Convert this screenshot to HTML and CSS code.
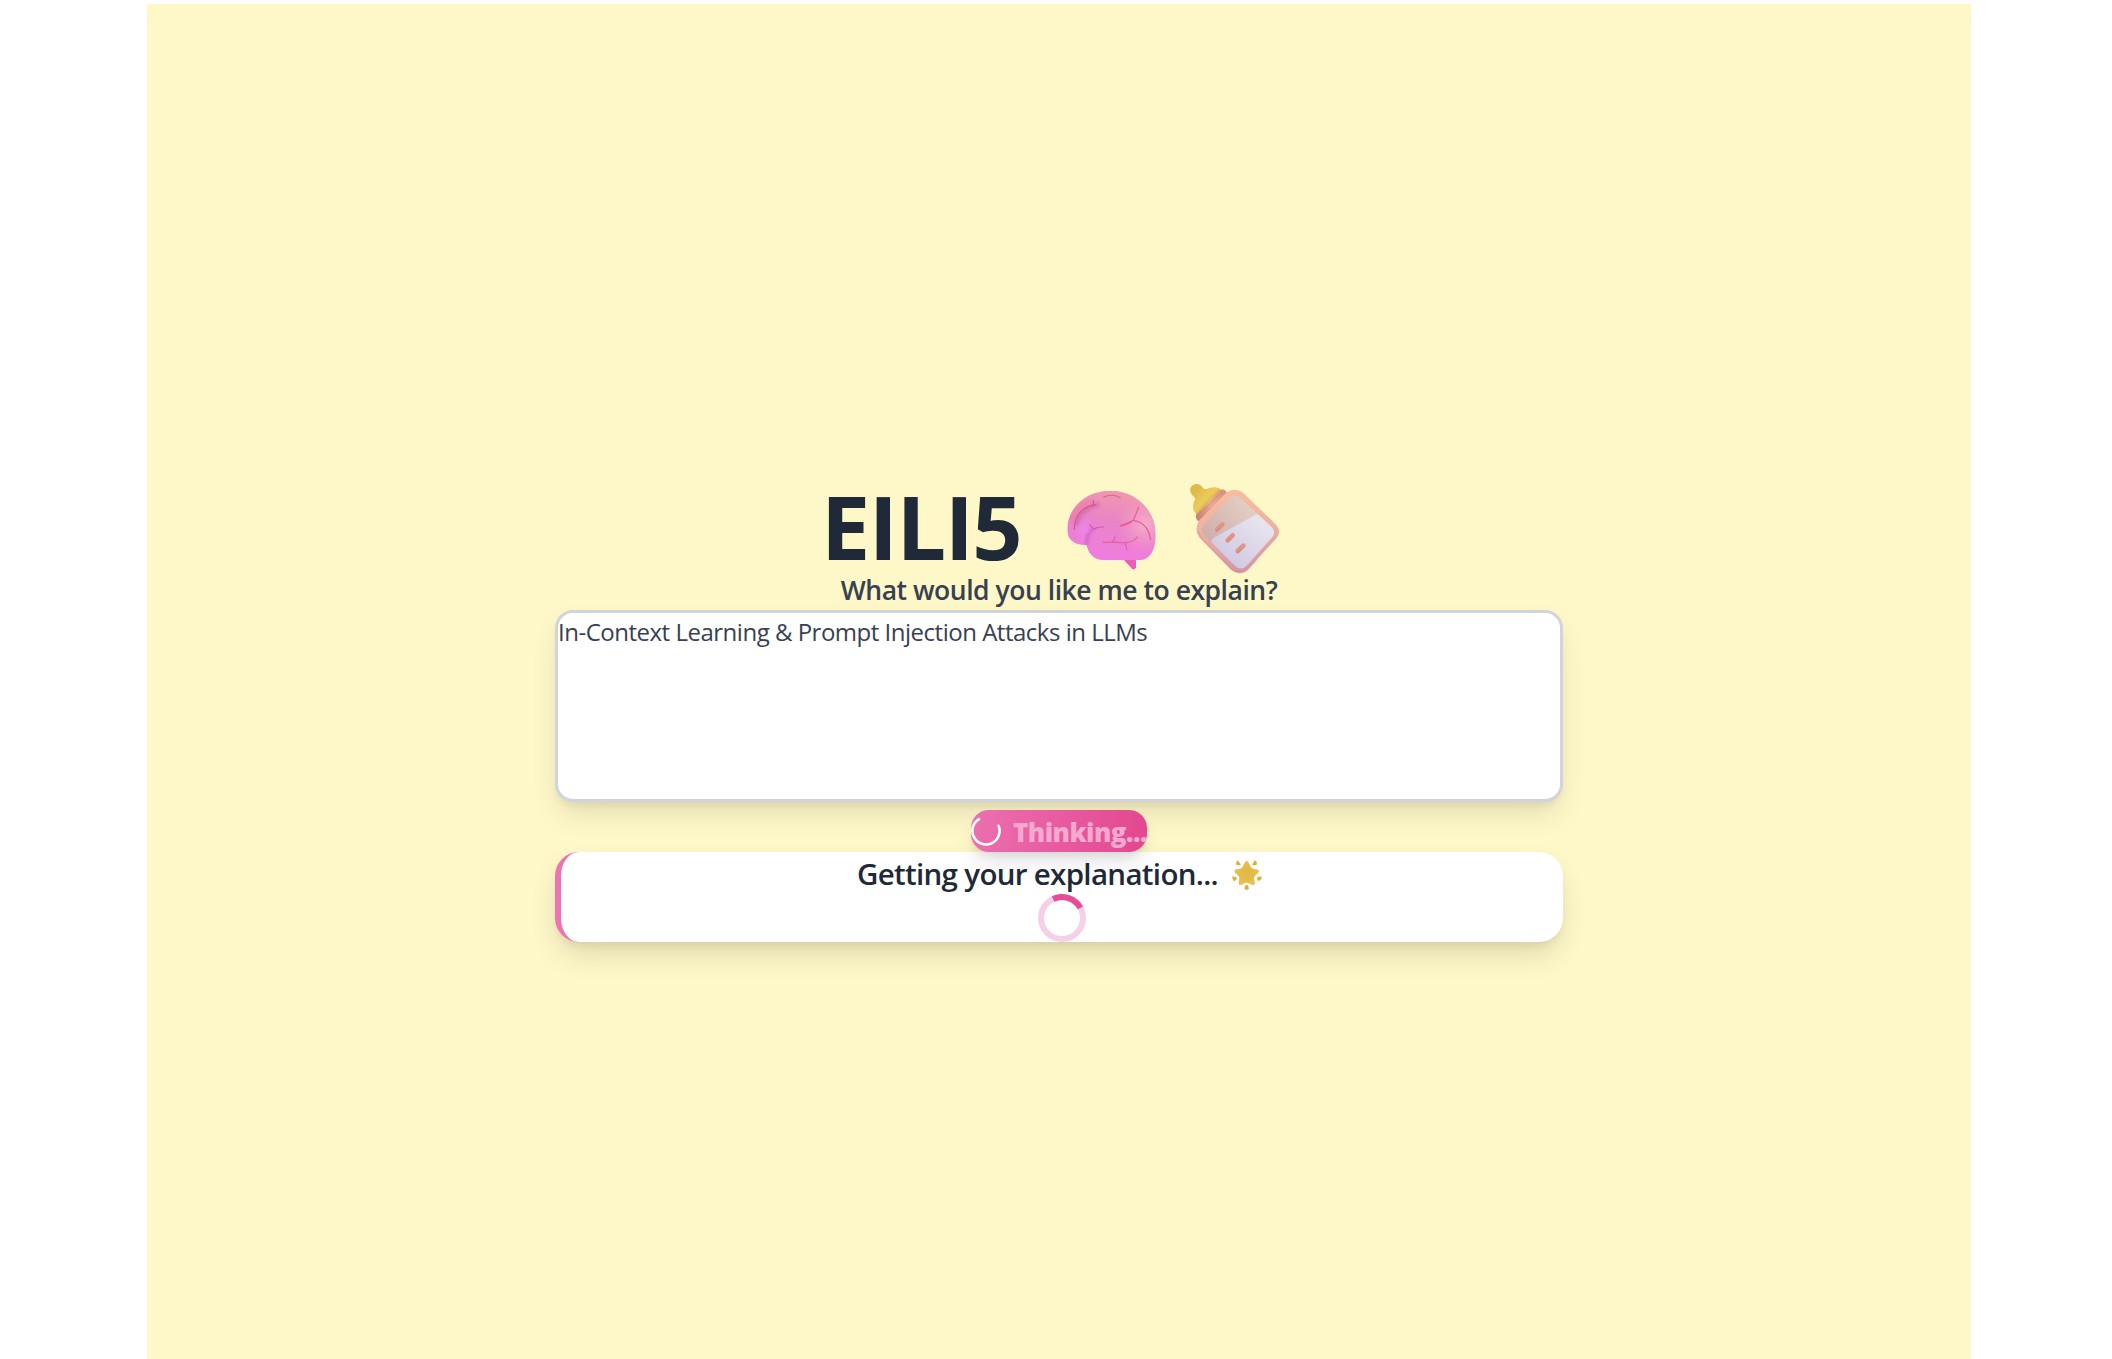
FILE: index.html
```html
<!DOCTYPE html>
<html lang="en">
<head>
<meta charset="utf-8">
<title>EILI5</title>
<link rel="stylesheet" href="styles.css">
</head>
<body>
<main class="page">
  <div class="column">
    <h1 class="title">
      <span class="title-text">EILI5</span>
      <svg class="brain" viewBox="48 57 273 243" aria-hidden="true">
        <defs>
          <linearGradient id="brainBase" x1=".7" y1="0" x2=".4" y2="1"><stop offset="0" stop-color="#f29aaa"/><stop offset=".45" stop-color="#e985c6"/><stop offset="1" stop-color="#f07be2"/></linearGradient>
          <radialGradient id="brainLight" cx="285" cy="165" r="85" gradientUnits="userSpaceOnUse"><stop offset="0" stop-color="#f5aec6"/><stop offset="1" stop-color="#f19ac8" stop-opacity="0"/></radialGradient>
          <radialGradient id="brainGlow" cx="105" cy="180" r="50" gradientUnits="userSpaceOnUse"><stop offset="0" stop-color="#ef86f0"/><stop offset="1" stop-color="#e77dd4" stop-opacity="0"/></radialGradient>
          <linearGradient id="brainShade" x1="50" y1="0" x2="120" y2="30" gradientUnits="userSpaceOnUse"><stop offset="0" stop-color="#c7649c" stop-opacity=".7"/><stop offset="1" stop-color="#d66ba4" stop-opacity="0"/></linearGradient>
          <filter id="soft" x="-30%" y="-30%" width="160%" height="160%"><feGaussianBlur stdDeviation="5"/></filter>
          <clipPath id="brainClip"><path d="M52 180C52 116 104 62 181 62C262 62 317 124 317 194C317 240 300 270 268 270H160C132 270 114 250 110 225C76 226 52 212 52 180Z"/></clipPath>
        </defs>
        <path d="M220 268H258V292Q256 300 247 297Q234 284 220 268Z" fill="#ee5cba"/>
        <g clip-path="url(#brainClip)">
          <path d="M50 60H320V272H50Z" fill="url(#brainBase)"/>
          <path d="M50 60H320V272H50Z" fill="url(#brainLight)"/>
          <path d="M50 60H320V272H50Z" fill="url(#brainShade)"/>
          <path d="M50 60H320V272H50Z" fill="url(#brainGlow)"/>
          <path d="M78 165C86 129 110 114 148 102" fill="none" stroke="#c65c9e" stroke-width="14" opacity=".5" filter="url(#soft)"/>
          <path d="M68 155C75 115 100 97 125 94" fill="none" stroke="#ef80a4" stroke-width="13" opacity=".75" filter="url(#soft)"/>
          <path d="M110 226Q108 188 132 176" fill="none" stroke="#bd58b5" stroke-width="10" opacity=".55" filter="url(#soft)"/>
        </g>
        <g fill="none" stroke="#e75d9c" stroke-width="3.5" stroke-linecap="round">
          <path d="M73 178C74 136 96 111 136 104M130 91V104" stroke="#d55684"/>
          <path d="M161 82Q184 69 211 83" stroke="#dd6585"/>
          <path d="M210 168Q229 164 250 151L266 112M250 151Q294 158 302 209"/>
          <path d="M213 167Q229 164 244 155" stroke-width="6"/>
          <path d="M119 164L131 178Q144 170 161 171" stroke="#d458ab"/>
          <path d="M159 217Q188 216 202 217Q247 223 262 201M188 215Q195 207 195 198M224 220Q231 229 230 240"/>
        </g>
      </svg>
      <svg class="bottle" viewBox="57 39 273 273" aria-hidden="true">
        <defs>
          <linearGradient id="frame" x1=".4" y1="0" x2=".5" y2="1"><stop offset="0" stop-color="#f8bd9f"/><stop offset=".5" stop-color="#eeb0a2"/><stop offset="1" stop-color="#d493a5"/></linearGradient>
          <linearGradient id="glass" x1="100" y1="190" x2="220" y2="90" gradientUnits="userSpaceOnUse"><stop offset="0" stop-color="#cfafad"/><stop offset="1" stop-color="#e3cdc3"/></linearGradient>
          <linearGradient id="milk" x1="270" y1="160" x2="180" y2="280" gradientUnits="userSpaceOnUse"><stop offset="0" stop-color="#e5e3ec"/><stop offset="1" stop-color="#d2c9e3"/></linearGradient>
          <linearGradient id="teat" x1="68" y1="75" x2="115" y2="120" gradientUnits="userSpaceOnUse"><stop offset="0" stop-color="#dfbb4b"/><stop offset=".55" stop-color="#ebcb5b"/><stop offset="1" stop-color="#d0aa40"/></linearGradient>
          <linearGradient id="collar" x1="80" y1="140" x2="165" y2="65" gradientUnits="userSpaceOnUse"><stop offset="0" stop-color="#c98276"/><stop offset=".5" stop-color="#edaa92"/><stop offset="1" stop-color="#dc927e"/></linearGradient>
          <clipPath id="glassClip"><path d="M104 160L174 86Q192 67 211 84L304 170Q320 185 306 202L231 286Q214 305 195 287L102 195Q88 178 104 160Z"/></clipPath>
        </defs>
        <path d="M63 70C55 55 67 41 81 42C96 42 97 57 106 58C119 53 137 47 151 57L148 75L83 134C66 126 66 104 76 88C75 81 67 78 63 70Z" fill="url(#teat)"/>
        <path d="M78 134L149 61Q160 54 168 64L180 77L94 157Q74 151 78 134Z" fill="url(#collar)"/>
        <path d="M82 139L157 65" stroke="#c77d6b" stroke-width="3" opacity=".5"/>
        <path d="M88 151L164 73Q191 49 219 68L317 163Q336 184 319 205L235 297Q211 320 184 299L88 202Q71 178 88 151Z" fill="url(#frame)"/>
        <path d="M84 181Q88 199 101 213L185 299Q212 318 235 297L260 270" fill="none" stroke="#cf8b9c" stroke-width="5" opacity=".35"/>
        <g clip-path="url(#glassClip)">
          <path d="M80 60H330V310H80Z" fill="url(#glass)"/>
          <path d="M123 214Q128 203 140 199L262 131L340 190L210 320Z" fill="url(#milk)"/>
        </g>
        <g stroke="#df9585" stroke-width="14" stroke-linecap="round"><path d="M141 179L157 164M173 211L188 196M203 243L220 227"/></g>
        <g stroke="#c97971" stroke-width="3" stroke-linecap="round" opacity=".6"><path d="M138 185L150 175M170 217L182 206M201 249L213 239"/></g>
      </svg>
    </h1>
    <label class="question" for="topic"><span class="question-text">What would you like me to explain?</span></label>
    <div class="field" id="topic"><span class="field-text">In-Context Learning &amp; Prompt Injection Attacks in LLMs</span></div>
    <button class="submit" type="button">
      <svg class="mini-spinner" viewBox="0 0 30 30" aria-hidden="true"><path d="M8 3.2A13.6 13.6 0 1 0 27.6 9.8" fill="none" stroke="#fff" stroke-width="2.6" stroke-linecap="round"/></svg>
      <span class="submit-text">Thinking...</span>
    </button>
    <section class="result">
      <h2 class="status"><span class="status-text">Getting your explanation...</span>
        <svg class="star" viewBox="0 0 90 90" aria-hidden="true">
          <defs><radialGradient id="gold"><stop offset="0" stop-color="#dcb84c"/><stop offset=".6" stop-color="#e5bd46"/><stop offset="1" stop-color="#e9c253"/></radialGradient></defs>
          <path d="M39 6Q44 0 49 6L57 22Q59 25 63 26L78 29Q84 33 79 38L68 49Q66 52 66 56L69 70Q68 77 61 75L49 69Q44 66 39 69L27 75Q20 77 20 70L22 56Q23 52 20 49L8 37Q5 31 12 28L25 26Q29 25 31 22Z" fill="url(#gold)"/>
          <g fill="#e0ae3c"><path d="M14 4Q16 0 19 3L26 13Q26 17 22 16L14 15Q11 12 14 4ZM73 4Q70 0 67 3L61 13Q61 17 65 16L73 15Q76 12 73 4ZM1 49L13 52Q16 55 13 59L8 63Q3 63 1 53ZM88 49L76 52Q73 55 76 59L81 63Q86 63 89 53ZM41 76Q44 72 47 76L51 85Q51 89 44 90Q36 89 37 85Z"/></g>
        </svg>
      </h2>
      <svg class="spinner" viewBox="0 0 48 48" aria-hidden="true"><circle cx="24" cy="24" r="21" fill="none" stroke="#f5d0e7" stroke-width="6"/><path d="M15.1 5A21 21 0 0 1 42.4 13.9" fill="none" stroke="#e84c99" stroke-width="6"/></svg>
    </section>
  </div>
</main>
</body>
</html>
```
FILE: styles.css
```css
* { box-sizing: border-box; }
body { margin: 0; background: #fff; font-family: "Open Sans", "Noto Sans", sans-serif; }
.page { width: 1824px; height: 1355px; margin: 4px 0 0 147px; padding-top: 479px; background: #fef7c8; overflow: hidden; }
.column { width: 1008px; margin: 0 auto; display: flex; flex-direction: column; align-items: center; }
.title { display: flex; align-items: flex-start; width: 100%; height: 91px; margin: 0; padding-left: 266px; color: #1f2937; font-size: 88px; font-weight: 700; line-height: 87px; white-space: nowrap; }
.title-text { width: 245px; letter-spacing: -1.5px; }
.brain { width: 91px; height: 81px; margin-top: 6px; flex: none; }
.bottle { width: 91px; height: 91px; margin-left: 32px; flex: none; }
.question { display: flex; justify-content: center; height: 36px; line-height: 32px; color: #374151; font-size: 26.5px; font-weight: 600; white-space: nowrap; }
.question-text { letter-spacing: -.47px; }
.field { width: 100%; height: 192px; border: 3px solid #d1d5db; border-radius: 18px; background: #fff; color: #374151; font-size: 24px; line-height: 38px; box-shadow: 0 15px 30px -4px rgba(0,0,0,.1), 0 6px 9px -3px rgba(0,0,0,.07); white-space: nowrap; }
.field-text { letter-spacing: -.49px; }
.submit { position: relative; display: flex; align-items: center; width: 176px; height: 42px; margin: 8px 0 0; padding: 0; border: 0; border-radius: 18px; background: linear-gradient(100deg, #ec70b0, #e3468f); color: #f5a9d0; font: 800 26px/44px "Open Sans", "Noto Sans", sans-serif; box-shadow: 0 15px 22px -4px rgba(0,0,0,.1), 0 6px 9px -3px rgba(0,0,0,.08); white-space: nowrap; }
.mini-spinner { width: 30px; height: 30px; margin-right: 12px; flex: none; }
.submit-text { letter-spacing: -.55px; padding-top: 1px; }
.result { width: 100%; height: 90px; display: flex; flex-direction: column; align-items: center; border-left: 6px solid #ed73b5; border-radius: 24px; background: #fff; box-shadow: 0 15px 30px -4px rgba(0,0,0,.13), 0 6px 9px -3px rgba(0,0,0,.07); }
.status { display: flex; align-items: flex-start; width: 410px; height: 42px; margin: 0; color: #1f2937; font-size: 29.5px; font-weight: 600; line-height: 44px; white-space: nowrap; }
.status-text { width: 375px; letter-spacing: -.68px; }
.star { width: 30px; height: 30px; margin-top: 8px; flex: none; }
.spinner { width: 48px; height: 48px; flex: none; }
```
